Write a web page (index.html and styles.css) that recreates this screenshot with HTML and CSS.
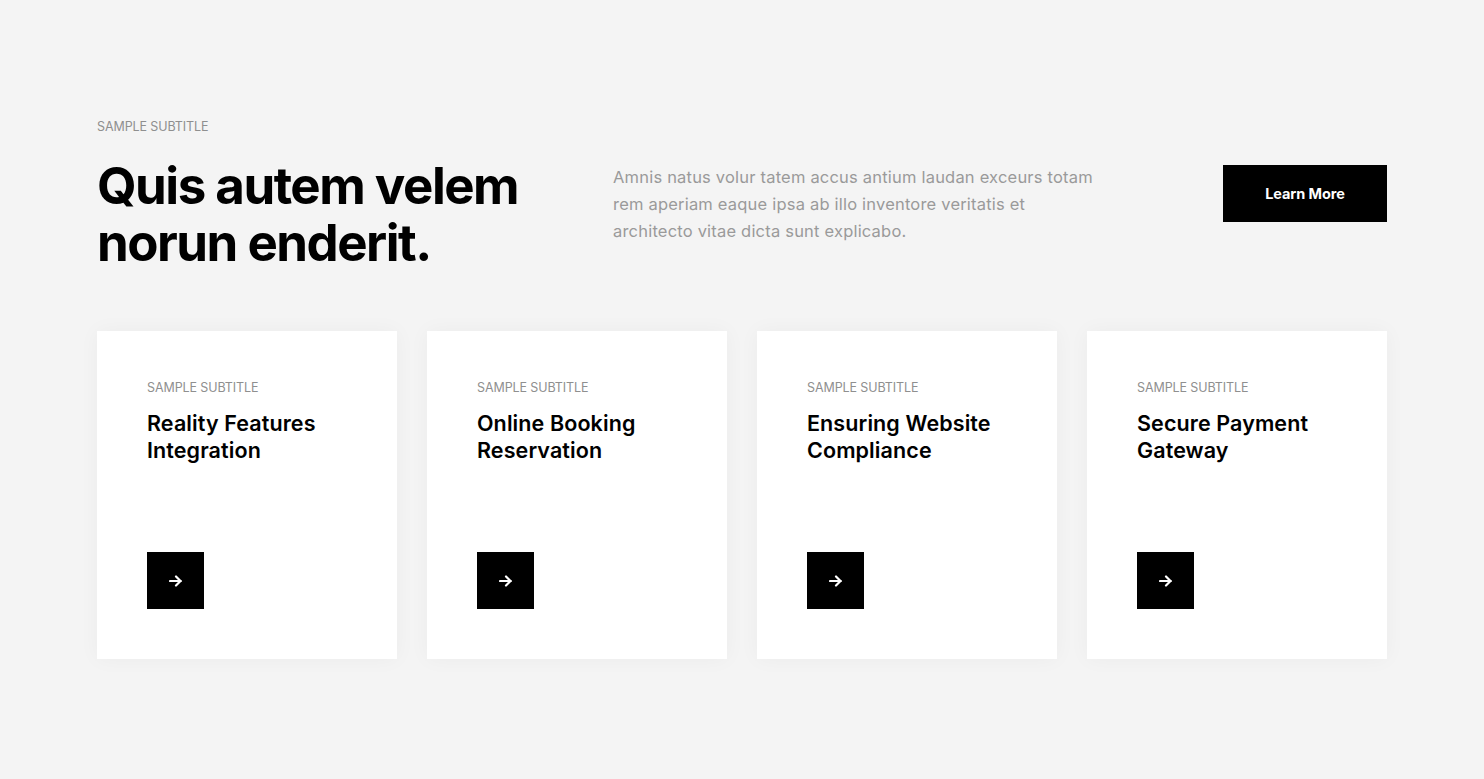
FILE: index.html
```html
<!DOCTYPE html>
<html lang="en">
<head>
<meta charset="utf-8">
<title>Features</title>
<link rel="stylesheet" href="styles.css">
</head>
<body>
<section class="section">
  <div class="container">
    <p class="subtitle">SAMPLE SUBTITLE</p>
    <div class="intro">
      <h1 class="heading">Quis autem velem norun enderit.</h1>
      <p class="lead">Amnis natus volur tatem accus antium laudan exceurs totam rem aperiam eaque ipsa ab illo inventore veritatis et architecto vitae dicta sunt explicabo.</p>
      <a class="btn" href="#">Learn More</a>
    </div>
    <div class="cards">
      <div class="card">
        <p class="card-sub">SAMPLE SUBTITLE</p>
        <h3 class="card-title">Reality Features Integration</h3>
        <a class="card-btn" href="#"><svg width="14" height="12" viewBox="0 0 14 12"><path d="M1 6h11M7 1.5 11.5 6 7 10.5" fill="none" stroke="#fff" stroke-width="2.2" stroke-linecap="round" stroke-linejoin="round"/></svg></a>
      </div>
      <div class="card">
        <p class="card-sub">SAMPLE SUBTITLE</p>
        <h3 class="card-title">Online Booking Reservation</h3>
        <a class="card-btn" href="#"><svg width="14" height="12" viewBox="0 0 14 12"><path d="M1 6h11M7 1.5 11.5 6 7 10.5" fill="none" stroke="#fff" stroke-width="2.2" stroke-linecap="round" stroke-linejoin="round"/></svg></a>
      </div>
      <div class="card">
        <p class="card-sub">SAMPLE SUBTITLE</p>
        <h3 class="card-title">Ensuring Website Compliance</h3>
        <a class="card-btn" href="#"><svg width="14" height="12" viewBox="0 0 14 12"><path d="M1 6h11M7 1.5 11.5 6 7 10.5" fill="none" stroke="#fff" stroke-width="2.2" stroke-linecap="round" stroke-linejoin="round"/></svg></a>
      </div>
      <div class="card">
        <p class="card-sub">SAMPLE SUBTITLE</p>
        <h3 class="card-title">Secure Payment Gateway</h3>
        <a class="card-btn" href="#"><svg width="14" height="12" viewBox="0 0 14 12"><path d="M1 6h11M7 1.5 11.5 6 7 10.5" fill="none" stroke="#fff" stroke-width="2.2" stroke-linecap="round" stroke-linejoin="round"/></svg></a>
      </div>
    </div>
  </div>
</section>
</body>
</html>
```

FILE: styles.css
```css
* { box-sizing: border-box; }
html, body { margin: 0; padding: 0; }
body {
  background: #f4f4f4;
  font-family: Inter, "Noto Sans", sans-serif;
  color: #000;
  min-height: 779px;
}
.section { padding: 119px 0 100px; }
.container { width: 1290px; margin: 0 auto; }
.subtitle {
  margin: 0;
  font-size: 12.5px;
  line-height: 16px;
  color: #8f8f8f;
  letter-spacing: -0.1px;
}
.intro {
  display: grid;
  grid-template-columns: 516px 486px 1fr;
  align-items: start;
  margin-top: 22px;
}
.heading {
  margin: 0;
  font-size: 51px;
  line-height: 57px;
  font-weight: 700;
  letter-spacing: -1.5px;
}
.lead {
  margin: 7px 0 0;
  font-size: 16.5px;
  line-height: 27px;
  color: #9a9a9a;
  letter-spacing: 0.2px;
}
.btn {
  justify-self: end;
  margin-top: 8px;
  display: flex;
  align-items: center;
  justify-content: center;
  width: 164px;
  height: 57px;
  background: #000;
  color: #fff;
  font-size: 14.5px;
  font-weight: 700;
  text-decoration: none;
  letter-spacing: -0.1px;
}
.cards {
  display: grid;
  grid-template-columns: repeat(4, 300px);
  gap: 30px;
  margin-top: 60px;
}
.card {
  height: 328px;
  background: #fff;
  padding: 50px;
  display: flex;
  flex-direction: column;
  align-items: flex-start;
  box-shadow: 0 0 20px rgba(0,0,0,0.04);
}
.card-sub {
  margin: 0;
  font-size: 12.5px;
  line-height: 13px;
  color: #8f8f8f;
  letter-spacing: -0.1px;
}
.card-title {
  margin: 16px 0 0;
  font-size: 21.5px;
  line-height: 27px;
  font-weight: 600;
  letter-spacing: 0.1px;
}
.card-btn {
  margin-top: auto;
  width: 57px;
  height: 57px;
  background: #000;
  display: flex;
  align-items: center;
  justify-content: center;
}
```
